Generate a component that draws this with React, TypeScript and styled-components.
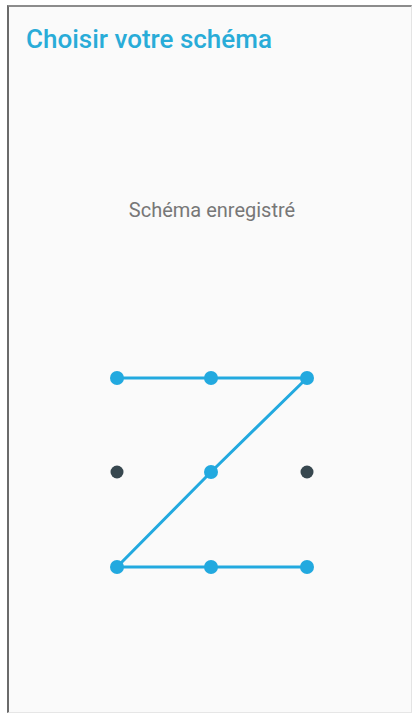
import styled, { createGlobalStyle } from 'styled-components';

const GlobalStyle = createGlobalStyle`
  html, body {
    margin: 0;
    padding: 0;
    background: #ffffff;
  }
  body {
    font-family: Roboto, "Noto Sans", "Liberation Sans", sans-serif;
  }
`;

const BLUE = '#22a9df';
const DARK = '#37474f';

// dot grid coordinates inside the svg
const cols = [20, 114, 210];
const rows = [20, 114, 209];

const pattern = [
  [0, 0],
  [1, 0],
  [2, 0],
  [1, 1],
  [0, 2],
  [1, 2],
  [2, 2],
];

const Page = styled.div`
  width: 415px;
  height: 715px;
  box-sizing: border-box;
  padding: 5px 3px 2px 7px;
`;

const Screen = styled.div`
  height: 100%;
  box-sizing: border-box;
  background: #fafafa;
  border-left: 2px solid #6b6b6b;
  border-top: 2px solid #8c8c8c;
  border-right: 1px solid #e4e4e4;
  border-bottom: 1px solid #e6e6e6;
  display: flex;
  flex-direction: column;
`;

const Title = styled.h1`
  margin: 0;
  padding: 17px 0 0 17px;
  font-size: 26px;
  line-height: 30px;
  font-weight: 500;
  color: #29acd8;
`;

const Subtitle = styled.p`
  margin: 145px 0 0;
  padding-left: 4px;
  text-align: center;
  font-size: 20px;
  line-height: 23px;
  color: #777777;
`;

const PatternWrap = styled.div`
  display: flex;
  padding-left: 88px;
  margin-top: 136px;
`;

const PatternView = () => {
  const isOn = (c: number, r: number) => pattern.some(([pc, pr]) => pc === c && pr === r);
  const points = pattern.map(([c, r]) => `${cols[c]},${rows[r]}`).join(' ');
  return (
    <svg width="232" height="230" viewBox="0 0 232 230">
      <polyline points={points} fill="none" stroke={BLUE} strokeWidth="3" strokeLinejoin="round" />
      {rows.map((y, r) =>
        cols.map((x, c) => (
          <circle
            key={`${r}-${c}`}
            cx={x}
            cy={y}
            r={isOn(c, r) ? 7 : 6.5}
            fill={isOn(c, r) ? BLUE : DARK}
          />
        ))
      )}
    </svg>
  );
};

const App = () => (
  <>
    <GlobalStyle />
    <Page>
      <Screen>
        <Title>Choisir votre schéma</Title>
        <Subtitle>Schéma enregistré</Subtitle>
        <PatternWrap>
          <PatternView />
        </PatternWrap>
      </Screen>
    </Page>
  </>
);

export default App;
